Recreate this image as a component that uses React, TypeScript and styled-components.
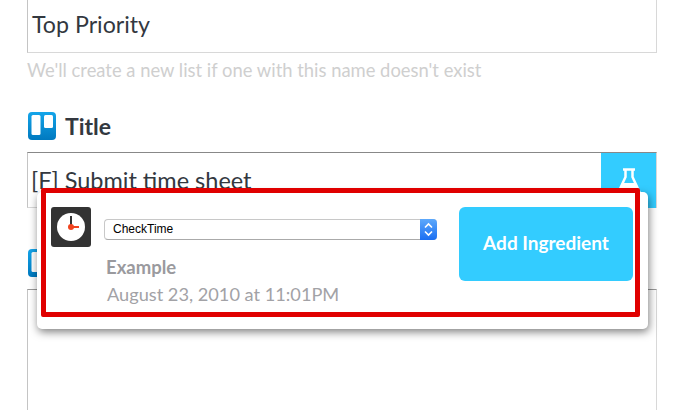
import styled, { createGlobalStyle } from "styled-components";

const Global = createGlobalStyle`
  html, body {
    margin: 0;
    padding: 0;
    height: 100%;
    overflow: hidden;
    background: #fff;
    font-family: "Lato", "Open Sans", sans-serif;
  }
`;

const Page = styled.div`
  position: relative;
  width: 691px;
  height: 410px;
  overflow: hidden;
  box-sizing: border-box;
  padding-left: 27px;
`;

const Column = styled.div`
  width: 630px;
  display: flex;
  flex-direction: column;
`;

const TextBox = styled.div<{ $h: number; $top?: string }>`
  box-sizing: border-box;
  height: ${(p) => p.$h}px;
  border: 1px solid #d8d8d8;
  border-left-color: #c4c4c4;
  border-top: 1px solid ${(p) => p.$top || "#d8d8d8"};
  font-size: 23.5px;
  line-height: 32px;
  color: #33383f;
  padding-left: 4px;
  display: flex;
  position: relative;
`;

const TopBox = styled(TextBox)`
  margin-top: -10px;
  padding-top: 17px;
  font-size: 23.2px;
`;

const TitleBox = styled(TextBox)`
  padding-top: 11px;
  padding-left: 3px;
`;

const Help = styled.div`
  font-size: 18.4px;
  line-height: 20px;
  color: #cfcfcf;
  margin-top: 7px;
  height: 20px;
`;

const Label = styled.div<{ $mt: number }>`
  display: flex;
  align-items: center;
  gap: 9px;
  height: 28px;
  margin-top: ${(p) => p.$mt}px;
  margin-bottom: 12px;
  padding-left: 1px;
  font-size: 23px;
  font-weight: 700;
  color: #33383f;
`;

const FlaskBtn = styled.div`
  position: absolute;
  right: 0;
  top: 0;
  width: 55px;
  height: 55px;
  background: #33ccff;
  display: flex;
  justify-content: center;
  padding-top: 15px;
  box-sizing: border-box;
`;

const Popup = styled.div`
  position: absolute;
  left: 37px;
  top: 192px;
  width: 611px;
  height: 137px;
  box-sizing: border-box;
  background: #fff;
  border-radius: 5px;
  box-shadow: 1px 3px 8px rgba(0, 0, 0, 0.5);
  padding: 15px 15px 0 14px;
  display: flex;
`;

const Highlight = styled.div`
  position: absolute;
  left: 4px;
  top: -4px;
  width: 599px;
  height: 129px;
  box-sizing: border-box;
  border: 5px solid #e00000;
  border-radius: 2px;
  pointer-events: none;
`;

const Clock = styled.div`
  width: 40px;
  height: 40px;
  flex: none;
  background: #333;
  border-radius: 3px;
  display: flex;
  align-items: center;
  justify-content: center;
`;

const Middle = styled.div`
  width: 333px;
  margin-left: 13px;
  padding-top: 12px;
`;

const Select = styled.div`
  height: 21px;
  box-sizing: border-box;
  display: flex;
  border: 1px solid #c8c8c8;
  border-bottom-color: #aaa;
  border-right: none;
  border-radius: 4px;
  font-family: "Liberation Sans", sans-serif;
  font-size: 12px;
  color: #000;
  line-height: 19px;
  padding-left: 8px;
  justify-content: space-between;
`;

const Stepper = styled.div`
  width: 17px;
  height: 21px;
  margin-top: -1px;
  border-radius: 0 4px 4px 0;
  background: linear-gradient(#5ea9fb, #1a6ef2);
  display: flex;
  align-items: center;
  justify-content: center;
`;

const ExampleTitle = styled.div`
  margin: 17px 0 0 2px;
  font-size: 18.5px;
  font-weight: 700;
  line-height: 20px;
  color: #9a9a9e;
`;

const ExampleDate = styled.div`
  margin: 7px 0 0 3px;
  font-size: 18.2px;
  line-height: 20px;
  color: #a2a2a6;
`;

const AddBtn = styled.div`
  width: 174px;
  height: 74px;
  margin-left: 22px;
  padding-bottom: 3px;
  box-sizing: border-box;
  background: #33ccff;
  border-radius: 6px;
  color: #fff;
  font-size: 19px;
  font-weight: 700;
  display: flex;
  align-items: center;
  justify-content: center;
`;

function TrelloIcon() {
  return (
    <svg width="28" height="28" viewBox="0 0 28 28" style={{ flex: "none" }}>
      <defs>
        <linearGradient id="tr" x1="0" y1="0" x2="0" y2="1">
          <stop offset="0" stopColor="#14a5ea" />
          <stop offset="1" stopColor="#0079bf" />
        </linearGradient>
      </defs>
      <rect width="28" height="28" rx="4" fill="url(#tr)" />
      <rect x="3.5" y="3" width="9" height="20" rx="1.5" fill="#fff" />
      <rect x="16" y="3" width="9" height="13" rx="1.5" fill="#fff" />
    </svg>
  );
}

function FlaskIcon() {
  return (
    <svg width="24" height="26" viewBox="0 0 24 26">
      <path d="M6 1.5h12" stroke="#fff" strokeWidth="2.5" fill="none" />
      <path d="M8.5 2v7L2 23h20L15.5 9V2" stroke="#fff" strokeWidth="2.5" fill="none" />
      <path d="M6 15h12l4 9H2z" fill="#fff" />
    </svg>
  );
}

function ClockIcon() {
  return (
    <svg width="28" height="28" viewBox="0 0 28 28">
      <circle cx="14" cy="14" r="14" fill="#fff" />
      <path d="M14 3v9" stroke="#333" strokeWidth="2" />
      <path d="M14 14h8" stroke="#f0431e" strokeWidth="2" />
      <circle cx="14" cy="14" r="3" fill="#f0431e" />
    </svg>
  );
}

function StepperIcon() {
  return (
    <svg width="11" height="15" viewBox="0 0 11 15">
      <path d="M2 5.5L5.5 2 9 5.5M2 9.5L5.5 13 9 9.5" stroke="#fff" strokeWidth="1.6" fill="none" />
    </svg>
  );
}

export default function App() {
  return (
    <Page>
      <Global />
      <Column>
        <TopBox $h={63}>Top Priority</TopBox>
        <Help>We'll create a new list if one with this name doesn't exist</Help>
        <Label $mt={32}>
          <TrelloIcon />
          Title
        </Label>
        <TitleBox $h={56} $top="#888">
          [F] Submit time sheet
          <FlaskBtn>
            <FlaskIcon />
          </FlaskBtn>
        </TitleBox>
        <Label $mt={41}>
          <TrelloIcon />
        </Label>
        <TextBox $h={140} $top="#999" />
      </Column>
      <Popup>
        <Clock>
          <ClockIcon />
        </Clock>
        <Middle>
          <Select>
            CheckTime
            <Stepper>
              <StepperIcon />
            </Stepper>
          </Select>
          <ExampleTitle>Example</ExampleTitle>
          <ExampleDate>August 23, 2010 at 11:01PM</ExampleDate>
        </Middle>
        <AddBtn>Add Ingredient</AddBtn>
        <Highlight />
      </Popup>
    </Page>
  );
}
